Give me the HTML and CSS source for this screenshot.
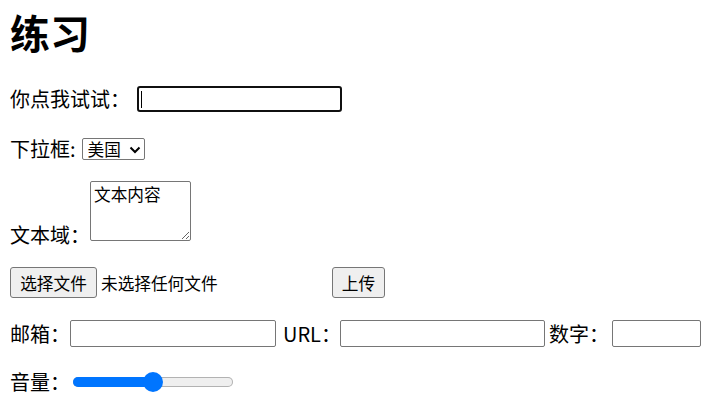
FILE: index.html
```html
<!DOCTYPE html>
<html lang="zh-CN">
<head>
<meta charset="utf-8">
<title>练习</title>
<link rel="stylesheet" href="styles.css">
</head>
<body>
<h1 class="title">练习</h1>

<div class="row row-1">
  <label class="lbl" for="try">你点我试试：</label>
  <span class="focus-wrap"><input id="try" class="field field-focus" type="text"></span>
</div>

<div class="row row-2">
  <label class="lbl" for="country">下拉框:</label>
  <span class="select-wrap">
    <select id="country" class="select">
      <option>美国</option>
      <option>中国</option>
    </select>
    <svg class="chev" width="12" height="8" viewBox="0 0 12 8"><path d="M1.5 1.5 L6 6 L10.5 1.5" fill="none" stroke="#000" stroke-width="2"/></svg>
  </span>
</div>

<div class="row row-3">
  <label class="lbl lbl-bottom" for="ta">文本域：</label>
  <textarea id="ta" class="area">文本内容</textarea>
</div>

<div class="row row-4">
  <label class="file">
    <input class="file-input" type="file">
    <span class="btn btn-file">选择文件</span>
    <span class="file-text">未选择任何文件</span>
  </label>
  <button class="btn btn-upload" type="submit">上传</button>
</div>

<div class="row row-5">
  <label class="lbl" for="mail">邮箱：</label>
  <input id="mail" class="field field-mail" type="email">
  <label class="lbl lbl-url" for="url">URL：</label>
  <input id="url" class="field field-url" type="url">
  <label class="lbl lbl-num" for="num">数字：</label>
  <input id="num" class="field field-num" type="number">
</div>

<div class="row row-6">
  <span class="lbl">音量：</span>
  <div class="range" role="slider" aria-valuenow="50" aria-valuemin="0" aria-valuemax="100">
    <div class="track"><div class="fill" style="width:80px"></div></div>
    <div class="thumb" style="left:70px"></div>
  </div>
</div>
</body>
</html>
```

FILE: styles.css
```css
html, body {
  margin: 0;
  padding: 0;
  background: #fff;
}
body {
  padding: 0 10px;
  font-family: "Noto Sans CJK SC", "Noto Sans", sans-serif;
  font-size: 20px;
  color: #000;
}
.title {
  margin: 12px 0 0;
  font-size: 40px;
  line-height: 40px;
  font-weight: bold;
}
.row {
  display: flex;
  align-items: center;
}
.row-1 { margin-top: 34px; }
.row-2 { margin-top: 26px; }
.row-3 { margin-top: 21px; align-items: flex-end; }
.row-4 { margin-top: 26px; }
.row-5 { margin-top: 22px; }
.row-6 { margin-top: 25px; }

.lbl {
  line-height: 20px;
  white-space: nowrap;
}
.lbl-bottom { margin-bottom: -4px; }
.lbl-url { margin-left: 7px; margin-right: -1px; }
.lbl-num { margin-left: 4px; margin-right: 3px; }

.field {
  box-sizing: border-box;
  height: 27px;
  margin: 0;
  border: 1px solid #767676;
  border-radius: 2px;
  background: #fff;
  font-family: "Noto Sans CJK SC", sans-serif;
  font-size: 16.67px;
  padding: 0 3px;
  outline: none;
}
.focus-wrap {
  position: relative;
  display: inline-flex;
  margin-left: 7px;
}
.field-focus {
  width: 205px;
  height: 26px;
  border: 2px solid #101010;
  border-radius: 3px;
}
.focus-wrap::after {
  content: "";
  position: absolute;
  left: 4px;
  top: 5px;
  width: 1px;
  height: 17px;
  background: #000;
}
.field-mail { width: 206px; }
.field-url { width: 205px; }
.field-num { width: 89px; }

.select-wrap {
  position: relative;
  display: inline-flex;
  margin-left: 6px;
}
.select {
  -webkit-appearance: none;
  appearance: none;
  box-sizing: border-box;
  width: 63px;
  height: 22px;
  margin: 0;
  padding: 0 0 0 5px;
  border: 1px solid #767676;
  border-radius: 2px;
  background: #fff;
  color: #000;
  font-family: "Noto Sans CJK SC", sans-serif;
  font-size: 16.67px;
  line-height: 20px;
  outline: none;
}
.chev {
  position: absolute;
  left: 47px;
  top: 8px;
  pointer-events: none;
}

.area {
  box-sizing: border-box;
  width: 101px;
  height: 60px;
  margin: 0;
  padding: 2px 3px;
  border: 1px solid #767676;
  border-radius: 2px;
  font-family: "Noto Sans CJK SC", sans-serif;
  font-size: 16.67px;
  line-height: 20px;
  color: #000;
  outline: none;
}

.file {
  display: flex;
  align-items: center;
  width: 316px;
}
.file-input { display: none; }
.btn {
  box-sizing: border-box;
  display: inline-flex;
  align-items: center;
  justify-content: center;
  height: 31px;
  margin: 0;
  padding: 0;
  border: 1px solid #767676;
  border-radius: 3px;
  background: #efefef;
  color: #000;
  font-family: "Noto Sans CJK SC", sans-serif;
  font-size: 16.67px;
  line-height: 20px;
}
.btn-file { width: 87px; }
.btn-upload { width: 53px; margin-left: 6px; }
.file-text {
  margin-left: 4px;
  font-size: 16.67px;
  line-height: 20px;
  white-space: nowrap;
}

.range {
  position: relative;
  width: 160px;
  height: 20px;
  margin-left: 3px;
  display: flex;
  align-items: center;
}
.track {
  width: 100%;
  height: 10px;
  border-radius: 5px;
  background: #efefef;
  box-shadow: inset 0 0 0 1px #b2b2b2;
  overflow: hidden;
}
.fill {
  height: 100%;
  background: #0075ff;
}
.thumb {
  position: absolute;
  top: 0;
  width: 20px;
  height: 20px;
  border-radius: 50%;
  background: #0075ff;
}
```
